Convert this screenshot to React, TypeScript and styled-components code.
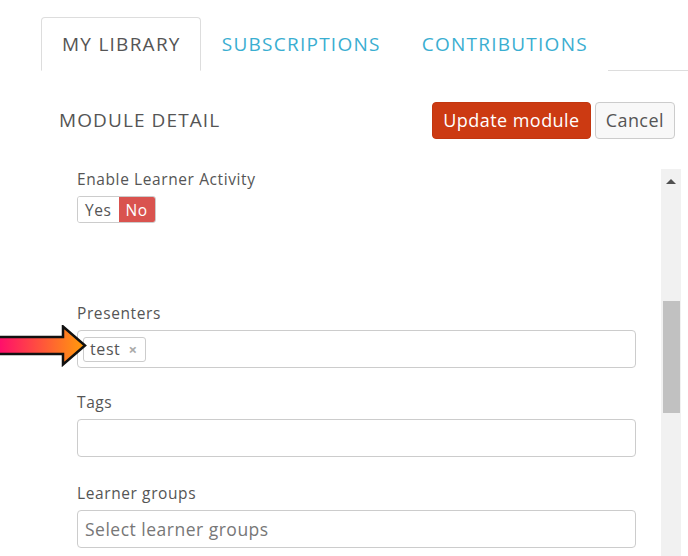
import React from "react";
import styled, { createGlobalStyle } from "styled-components";

const GlobalStyle = createGlobalStyle`
    body {
        margin: 0;
        background: #ffffff;
        font-family: "Open Sans", "Liberation Sans", sans-serif;
        color: #555555;
    }
`;

const Page = styled.div`
    position: relative;
    width: 688px;
    height: 556px;
    overflow: hidden;
    background: #ffffff;
`;

const TabBar = styled.div`
    display: flex;
    margin: 17px 0 0 41px;
    border-bottom: 1px solid #dddddd;
`;

const Tab = styled.div<{ $active?: boolean }>`
    height: 52px;
    padding: 0 19px 0 20px;
    display: flex;
    align-items: center;
    font-size: 19px;
    letter-spacing: 1.25px;
    color: ${(p) => (p.$active ? "#555555" : "#3aaed1")};
    background: #ffffff;
    border: 1px solid ${(p) => (p.$active ? "#dddddd" : "transparent")};
    border-bottom: 1px solid ${(p) => (p.$active ? "#ffffff" : "transparent")};
    border-radius: 4px 4px 0 0;
    margin-bottom: -1px;
`;

const Header = styled.div`
    display: flex;
    align-items: center;
    justify-content: space-between;
    margin-top: 31px;
    padding: 0 13px 0 59px;
    height: 36px;
`;

const Title = styled.h2`
    margin: 0;
    font-size: 19px;
    font-weight: 400;
    letter-spacing: 1.1px;
    color: #555555;
`;

const Actions = styled.div`
    display: flex;
    gap: 4px;
`;

const Button = styled.button<{ $primary?: boolean }>`
    height: 37px;
    padding: 0 10px;
    font-family: inherit;
    font-size: 18px;
    letter-spacing: 0.45px;
    border-radius: 4px;
    cursor: pointer;
    color: ${(p) => (p.$primary ? "#ffffff" : "#555555")};
    background: ${(p) => (p.$primary ? "#cc3a12" : "#f8f8f8")};
    border: 1px solid ${(p) => (p.$primary ? "#c2360f" : "#cccccc")};
`;

const Body = styled.div`
    display: flex;
    margin-top: 31px;
    height: 387px;
`;

const Form = styled.div`
    flex: 1;
    padding: 0 25px 0 77px;
    overflow: hidden;
`;

const Label = styled.div`
    font-size: 15.5px;
    line-height: 20px;
    letter-spacing: 0.6px;
    color: #555555;
    margin-bottom: 7px;
`;

const Field = styled.div<{ $gap: number }>`
    margin-bottom: ${(p) => p.$gap}px;
`;

const Toggle = styled.div`
    display: inline-flex;
    height: 27px;
    border-radius: 3px;
    overflow: hidden;
    border: 1px solid #cccccc;
    box-sizing: border-box;
`;

const ToggleOption = styled.div<{ $on?: boolean }>`
    display: flex;
    align-items: center;
    padding: 0 7px;
    font-size: 15.5px;
    letter-spacing: 0.6px;
    color: ${(p) => (p.$on ? "#ffffff" : "#555555")};
    background: ${(p) => (p.$on ? "#d9534f" : "#ffffff")};
`;

const Input = styled.div`
    height: 38px;
    box-sizing: border-box;
    border: 1px solid #cccccc;
    border-radius: 4px;
    display: flex;
    align-items: center;
    padding: 0 5px;
`;

const Placeholder = styled.span`
    font-size: 17.5px;
    letter-spacing: 0.5px;
    color: #777777;
    padding-left: 2px;
`;

const Chip = styled.span`
    display: inline-flex;
    align-items: center;
    height: 25px;
    box-sizing: border-box;
    padding: 0 7px 0 6px;
    border: 1px solid #cccccc;
    border-radius: 3px;
    font-size: 16px;
    letter-spacing: 0.6px;
    color: #555555;
    gap: 8px;
`;

const ChipClose = styled.span`
    font-size: 15px;
    color: #aaaaaa;
    font-weight: 700;
`;

const Scrollbar = styled.div`
    width: 20px;
    margin-right: 7px;
    background: #f1f1f1;
    display: flex;
    flex-direction: column;
    align-items: center;
`;

const ScrollArrow = styled.div`
    margin-top: 10px;
    width: 0;
    height: 0;
    border-left: 5px solid transparent;
    border-right: 5px solid transparent;
    border-bottom: 5px solid #505050;
`;

const Thumb = styled.div`
    width: 17px;
    height: 112px;
    margin-top: 117px;
    background: #c1c1c1;
`;

const Pointer = styled.svg`
    position: absolute;
    left: 0;
    top: 325px;
`;

const App: React.FC = () => {
    return (
        <Page>
            <GlobalStyle />
            <TabBar>
                <Tab $active>MY LIBRARY</Tab>
                <Tab>SUBSCRIPTIONS</Tab>
                <Tab>CONTRIBUTIONS</Tab>
            </TabBar>
            <Header>
                <Title>MODULE DETAIL</Title>
                <Actions>
                    <Button $primary>Update module</Button>
                    <Button>Cancel</Button>
                </Actions>
            </Header>
            <Body>
                <Form>
                    <Field $gap={80}>
                        <Label>Enable Learner Activity</Label>
                        <Toggle>
                            <ToggleOption>Yes</ToggleOption>
                            <ToggleOption $on>No</ToggleOption>
                        </Toggle>
                    </Field>
                    <Field $gap={24}>
                        <Label>Presenters</Label>
                        <Input>
                            <Chip>
                                test
                                <ChipClose>×</ChipClose>
                            </Chip>
                        </Input>
                    </Field>
                    <Field $gap={26}>
                        <Label>Tags</Label>
                        <Input />
                    </Field>
                    <Field $gap={0}>
                        <Label>Learner groups</Label>
                        <Input>
                            <Placeholder>Select learner groups</Placeholder>
                        </Input>
                    </Field>
                </Form>
                <Scrollbar>
                    <ScrollArrow />
                    <Thumb />
                </Scrollbar>
            </Body>
            <Pointer width="90" height="42" viewBox="0 0 90 42">
                <defs>
                    <linearGradient id="arrowFill" x1="0" y1="0" x2="1" y2="0">
                        <stop offset="0" stopColor="#ff0a6e" />
                        <stop offset="1" stopColor="#ff9d0a" />
                    </linearGradient>
                </defs>
                <polygon
                    points="-3,12 63,12 63,1.5 85,20.5 63,39.5 63,29 -3,29"
                    fill="url(#arrowFill)"
                    stroke="#111111"
                    strokeWidth="2.5"
                    strokeLinejoin="miter"
                />
            </Pointer>
        </Page>
    );
};

export default App;
